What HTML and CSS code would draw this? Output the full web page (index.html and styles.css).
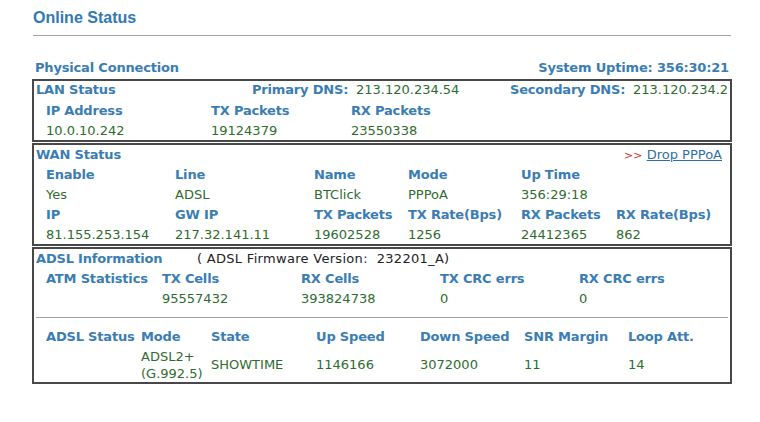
FILE: index.html
```html
<!DOCTYPE html>
<html>
<head>
<meta charset="utf-8">
<link rel="stylesheet" href="styles.css">
</head>
<body>
<div class="page">
  <h1 class="title">Online Status</h1>
  <div class="rule"></div>
  <div class="phys">
    <span class="lbl">Physical Connection</span>
    <span class="lbl">System Uptime: 356:30:21</span>
  </div>

  <div class="box lan">
    <div class="head-row first">
      <span class="lbl sect">LAN Status</span>
      <span class="lbl dns1">Primary DNS:</span>
      <span class="val dns1v">213.120.234.54</span>
      <span class="lbl dns2">Secondary DNS:</span>
      <span class="val dns2v">213.120.234.2</span>
    </div>
    <div class="grid lan-grid">
      <span class="lbl">IP Address</span><span class="lbl">TX Packets</span><span class="lbl">RX Packets</span>
      <span class="val">10.0.10.242</span><span class="val">19124379</span><span class="val">23550338</span>
    </div>
  </div>

  <div class="box wan">
    <div class="head-row spread">
      <span class="lbl sect">WAN Status</span>
      <span class="drop"><span class="arrows">&gt;&gt;</span> <a href="#">Drop PPPoA</a></span>
    </div>
    <div class="grid wan-grid">
      <span class="lbl">Enable</span><span class="lbl">Line</span><span class="lbl">Name</span><span class="lbl">Mode</span><span class="lbl">Up Time</span><span></span>
      <span class="val">Yes</span><span class="val">ADSL</span><span class="val">BTClick</span><span class="val">PPPoA</span><span class="val">356:29:18</span><span></span>
      <span class="lbl">IP</span><span class="lbl">GW IP</span><span class="lbl">TX Packets</span><span class="lbl">TX Rate(Bps)</span><span class="lbl">RX Packets</span><span class="lbl">RX Rate(Bps)</span>
      <span class="val">81.155.253.154</span><span class="val">217.32.141.11</span><span class="val">19602528</span><span class="val">1256</span><span class="val">24412365</span><span class="val">862</span>
    </div>
  </div>

  <div class="box adsl">
    <div class="head-row">
      <span class="lbl sect adsl-sect">ADSL Information</span>
      <span class="plain">( ADSL Firmware Version:&nbsp; 232201_A)</span>
    </div>
    <div class="grid atm-grid">
      <span class="lbl">ATM Statistics</span><span class="lbl">TX Cells</span><span class="lbl">RX Cells</span><span class="lbl">TX CRC errs</span><span class="lbl">RX CRC errs</span>
      <span></span><span class="val">95557432</span><span class="val">393824738</span><span class="val">0</span><span class="val">0</span>
    </div>
    <div class="sep"></div>
    <div class="grid st-grid">
      <span class="lbl">ADSL Status</span><span class="lbl">Mode</span><span class="lbl">State</span><span class="lbl">Up Speed</span><span class="lbl">Down Speed</span><span class="lbl">SNR Margin</span><span class="lbl">Loop Att.</span>
      <span></span><span class="val two">ADSL2+<br>(G.992.5)</span><span class="val">SHOWTIME</span><span class="val">1146166</span><span class="val">3072000</span><span class="val">11</span><span class="val">14</span>
    </div>
  </div>
</div>
</body>
</html>
```
FILE: styles.css
```css
html, body {
  margin: 0;
  padding: 0;
  background: #ffffff;
}
body {
  font-family: "DejaVu Sans", Verdana, sans-serif;
  font-size: 13px;
}
.page {
  width: 700px;
  padding-left: 32px;
}
.title {
  margin: 0;
  padding: 8px 0 0 1px;
  height: 20px;
  line-height: 20px;
  font-family: "Liberation Sans", Arial, sans-serif;
  font-size: 16px;
  font-weight: bold;
  color: #3079b4;
}
.rule {
  margin: 7px 0 0 1px;
  width: 698px;
  height: 1px;
  background: #a3a3a3;
}
.phys {
  display: flex;
  justify-content: space-between;
  margin-top: 21px;
  padding: 0 3px 0 3px;
  height: 22px;
  line-height: 22px;
}
.lbl {
  font-weight: bold;
  color: #3a7db4;
  white-space: nowrap;
  letter-spacing: -0.18px;
}
.val {
  color: #2f6b2f;
  white-space: nowrap;
}
.plain {
  color: #222;
  white-space: nowrap;
  letter-spacing: 0.3px;
}
.box {
  border: 2px solid #484848;
  box-sizing: border-box;
  width: 700px;
  margin-top: 1px;
}
.phys + .box {
  margin-top: 0;
}
.head-row {
  display: flex;
  height: 20px;
  line-height: 20px;
  padding-left: 2px;
}
.head-row.first {
  line-height: 18px;
}
.spread {
  justify-content: space-between;
  padding-right: 8px;
}
.sect {
  width: 216px;
}
.dns1 {
  width: 95px;
  text-align: right;
}
.dns1v {
  margin-left: 9px;
  width: 154px;
}
.dns2 {
  width: 115px;
  text-align: right;
}
.dns2v {
  margin-left: 8px;
}
.grid {
  display: grid;
  grid-auto-rows: 20px;
  line-height: 20px;
  padding-left: 12px;
}
.lan-grid {
  grid-template-columns: 165px 140px 1fr;
}
.lan {
  height: 63px;
}
.wan-grid {
  grid-template-columns: 129px 139px 94px 113px 95px 1fr;
}
.wan {
  height: 103px;
}
.drop {
  font-size: 13px;
}
.arrows {
  color: #cc3333;
  font-size: 11px;
}
.drop a {
  color: #2e6fa8;
  text-decoration: underline;
}
.adsl-sect {
  width: 161px;
}
.atm-grid {
  grid-template-columns: 116px 139px 139px 139px 1fr;
}
.sep {
  margin: 8px 2px 9px 2px;
  height: 1px;
  background: #a0a0a0;
}
.st-grid {
  grid-template-columns: 95px 70px 105px 104px 104px 104px 1fr;
  grid-template-rows: 20px 35px;
}
.st-grid .val {
  align-self: center;
}
.st-grid .two {
  line-height: 17px;
}
.adsl {
  height: 137px;
}
```
